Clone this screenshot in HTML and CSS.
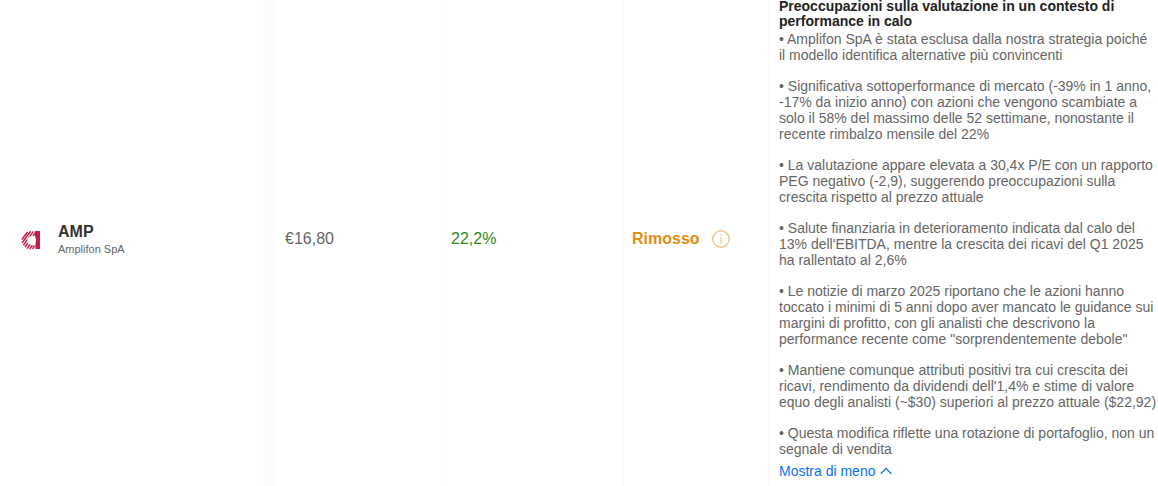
FILE: index.html
```html
<!DOCTYPE html>
<html lang="it">
<head>
    <meta charset="UTF-8">
    <meta name="viewport" content="width=device-width, initial-scale=1.0">
    <title>Amplifon SpA</title>
    <link rel="stylesheet" href="styles.css">
</head>
<body>
    <table class="holdings">
        <colgroup>
            <col class="col-name">
            <col class="col-price">
            <col class="col-change">
            <col class="col-status">
            <col class="col-reason">
        </colgroup>
        <tbody>
            <tr>
                <td class="name-cell">
                    <div class="stock">
                        <svg class="logo" viewBox="0 0 20 20" aria-hidden="true">
                            <g fill="none" stroke="#c41e4a" stroke-width="1.5">
                                <path d="M.9 9.5L6.6 2"/>
                                <path d="M1.2 12.8L9.6 1.2"/>
                                <path d="M2.4 15.2L12.4 1.4"/>
                                <path d="M4 17.2L7 13M12 6L14.4 2.6"/>
                                <path d="M6.2 18.6L9 14.4"/>
                                <path d="M8.8 19.2L11.4 15"/>
                                <path d="M11.6 19L13.6 15.6"/>
                            </g>
                            <path d="M14 1h5v18h-4.6v-4.4q1.6-4.4-.4-8.6z" fill="#c41e4a"/>
                            <circle cx="10.4" cy="10.2" r="4" fill="#fff"/>
                        </svg>
                        <div>
                            <div class="ticker">AMP</div>
                            <div class="company">Amplifon SpA</div>
                        </div>
                    </div>
                </td>
                <td class="price">€16,80</td>
                <td class="change">22,2%</td>
                <td>
                    <div class="status">
                        <span>Rimosso</span>
                        <button class="info" type="button" aria-label="Informazioni">
                            <svg viewBox="0 0 18 18" fill="none" stroke="#f2c48a">
                                <circle cx="9" cy="9" r="8.2" stroke-width="1.4"/>
                                <path d="M9 7v6.5M9 4.2v1.5" stroke-width="1.3"/>
                            </svg>
                        </button>
                    </div>
                </td>
                <td class="reason">
                    <h2>Preoccupazioni sulla valutazione in un contesto di<br>performance in calo</h2>
                    <p>• Amplifon SpA è stata esclusa dalla nostra strategia poiché<br>il modello identifica alternative più convincenti</p>
                    <p>• Significativa sottoperformance di mercato (-39% in 1 anno,<br>-17% da inizio anno) con azioni che vengono scambiate a<br>solo il 58% del massimo delle 52 settimane, nonostante il<br>recente rimbalzo mensile del 22%</p>
                    <p>• La valutazione appare elevata a 30,4x P/E con un rapporto<br>PEG negativo (-2,9), suggerendo preoccupazioni sulla<br>crescita rispetto al prezzo attuale</p>
                    <p>• Salute finanziaria in deterioramento indicata dal calo del<br>13% dell'EBITDA, mentre la crescita dei ricavi del Q1 2025<br>ha rallentato al 2,6%</p>
                    <p>• Le notizie di marzo 2025 riportano che le azioni hanno<br>toccato i minimi di 5 anni dopo aver mancato le guidance sui<br>margini di profitto, con gli analisti che descrivono la<br>performance recente come "sorprendentemente debole"</p>
                    <p>• Mantiene comunque attributi positivi tra cui crescita dei<br>ricavi, rendimento da dividendi dell'1,4% e stime di valore<br>equo degli analisti (~$30) superiori al prezzo attuale ($22,92)</p>
                    <p>• Questa modifica riflette una rotazione di portafoglio, non un<br>segnale di vendita</p>
                    <button class="toggle" type="button">
                        Mostra di meno
                        <svg viewBox="0 0 12 8" fill="none" stroke="#0a73eb" stroke-width="1.3">
                            <path d="M.8 6.8L6 1.4l5.2 5.4"/>
                        </svg>
                    </button>
                </td>
            </tr>
        </tbody>
    </table>
</body>
</html>
```
FILE: styles.css
```css
* {
    box-sizing: border-box;
}
body {
    margin: 0;
    background: #fff;
    color: #666;
    font-family: "Liberation Sans", Arial, sans-serif;
    font-size: 14px;
    line-height: 16px;
}
.holdings {
    width: 100%;
    table-layout: fixed;
    border-collapse: separate;
    border-spacing: 0;
}
.col-name {
    width: 275px;
}
.col-price {
    width: 168px;
}
.col-change {
    width: 181px;
}
.col-status {
    width: 145px;
}
td {
    padding: 0 8px 10px;
    border-right: 1px solid #fafafa;
    vertical-align: middle;
    font-size: 16px;
}
.name-cell {
    padding: 0 0 8px 20px;
    border-right: 12px solid #fcfcfc;
}
.stock {
    display: flex;
    align-items: center;
    gap: 16px;
}
.logo {
    width: 22px;
    height: 20px;
}
.ticker {
    color: #333;
    font-size: 16px;
    font-weight: bold;
    line-height: 18px;
}
.company {
    font-size: 11px;
}
.price {
    padding-left: 10px;
}
.change {
    color: #2e8b18;
}
.status {
    display: flex;
    align-items: center;
    gap: 12px;
    color: #e38b12;
    font-weight: bold;
}
button {
    padding: 0;
    border: none;
    background: none;
    font: inherit;
    cursor: pointer;
}
.info svg {
    display: block;
    width: 18px;
    height: 18px;
}
.reason {
    padding: 0 0 8px 10px;
    border-right: none;
    font-size: 14px;
}
h2 {
    margin: -1px 0 2px;
    color: #222;
    font-size: 14px;
    line-height: 15px;
}
p {
    margin: 0 0 15px;
}
.toggle {
    display: flex;
    align-items: center;
    gap: 5px;
    margin-top: -9px;
    color: #0a73eb;
}
.toggle svg {
    width: 12px;
    height: 8px;
}
```
